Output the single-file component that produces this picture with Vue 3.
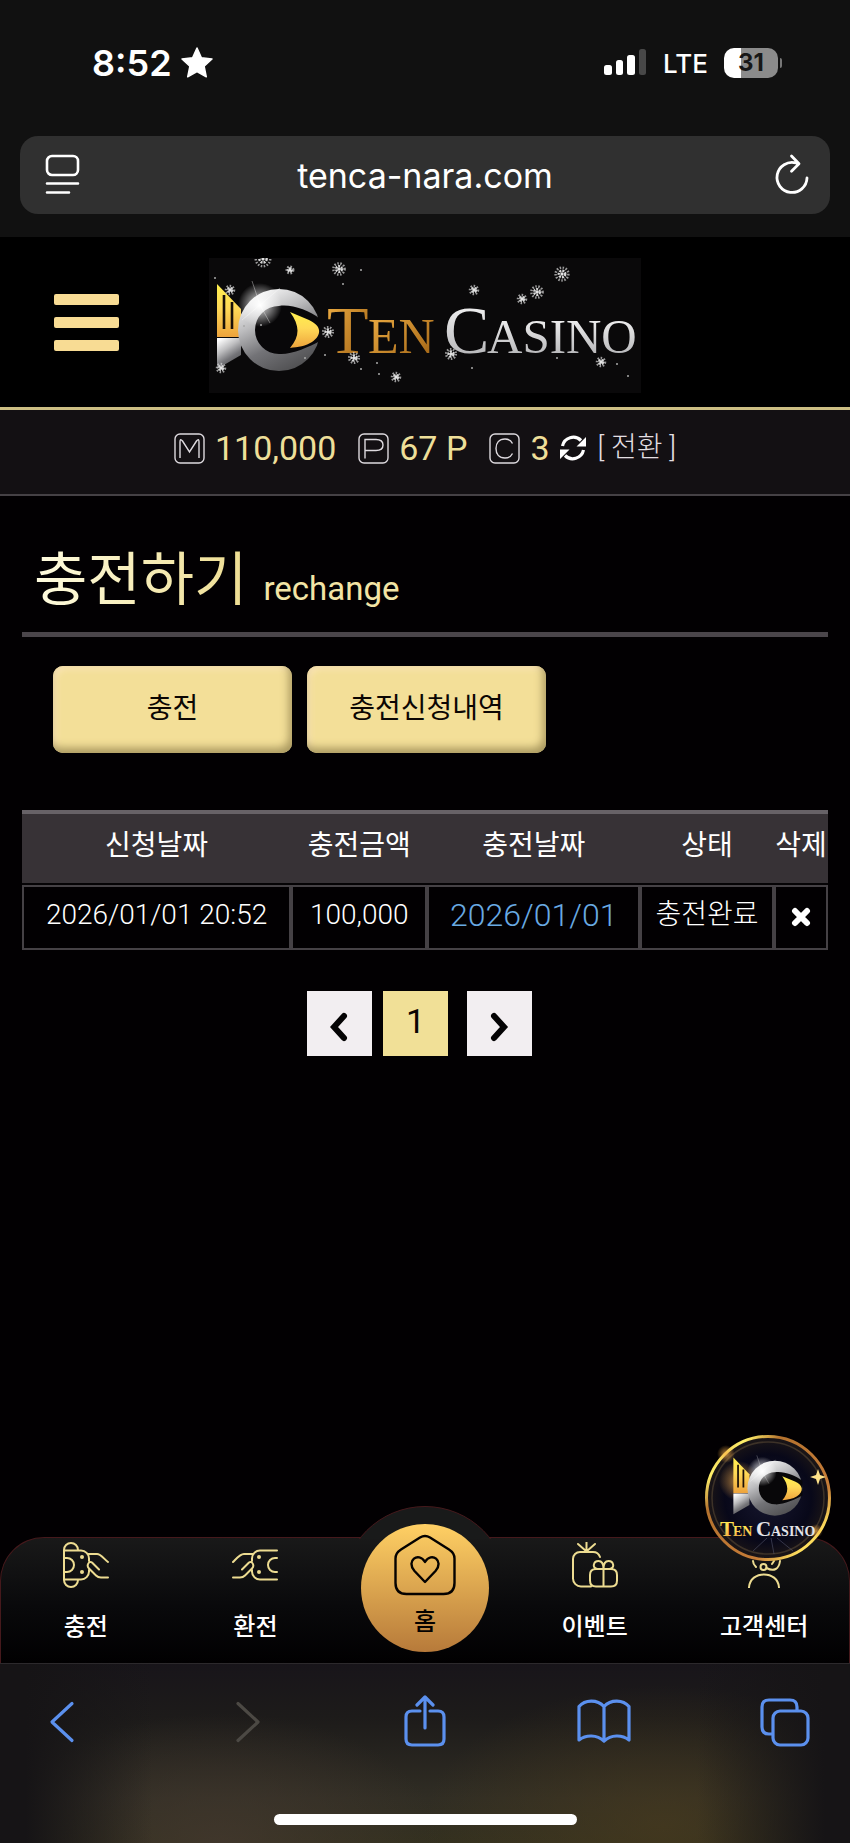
<script setup>
const balances = [
  { key: 'M', value: '110,000' },
  { key: 'P', value: '67 P' },
  { key: 'C', value: '3' },
]
const columns = ['신청날짜', '충전금액', '충전날짜', '상태', '삭제']
const rows = [
  { requested: '2026/01/01 20:52', amount: '100,000', charged: '2026/01/01', state: '충전완료' },
]
const flakes = [
  [54, 1, 9], [81, 12, 4], [130, 11, 7], [21, 32, 5], [12, 110, 5], [119, 74, 6], [145, 100, 6],
  [187, 119, 5], [265, 32, 5], [313, 41, 5], [328, 34, 7], [353, 16, 8], [242, 96, 6], [392, 104, 5],
]
const specks = [[6, 20], [134, 26], [152, 12], [96, 100], [116, 97], [152, 111], [170, 116], [168, 105], [263, 110], [348, 100], [408, 106], [419, 118], [35, 68], [52, 67]]
</script>

<template>
  <div class="screen">
    <header class="browser-top">
      <div class="status">
        <div class="clock">
          <span>8:52</span>
          <svg width="34" height="34" viewBox="0 0 34 34" aria-hidden="true"><path d="M17 2l4.400 9.800 10.600 1.200-7.900 7.200 2.200 10.600L17 25.500 7.700 30.800l2.200-10.600L2 13l10.600-1.200z" fill="#fff" stroke="#fff" stroke-width="1.500" stroke-linejoin="round" /></svg>
        </div>
        <div class="signals">
          <svg width="43" height="28" viewBox="0 0 43 28" aria-hidden="true">
            <rect x="0" y="16" width="8" height="10" rx="2.500" fill="#fff" />
            <rect x="12" y="11" width="7" height="15" rx="2.500" fill="#fff" />
            <rect x="23" y="6" width="8" height="20" rx="2.500" fill="#fff" />
            <rect x="35" y="0" width="7" height="26" rx="2.500" fill="#484848" />
          </svg>
          <span class="lte">LTE</span>
          <div class="battery"><span>31</span></div>
          <i class="battery-tip"></i>
        </div>
      </div>
      <div class="address">
        <button class="plain" aria-label="page menu">
          <svg width="36" height="42" viewBox="0 0 36 42" fill="none" stroke="#fff" stroke-width="2.600" stroke-linecap="round"><rect x="2" y="2" width="31" height="19" rx="5" /><path d="M2 29.500h31M2 38.500h22" /></svg>
        </button>
        <span class="domain">tenca-nara.com</span>
        <button class="plain" aria-label="reload">
          <svg width="36" height="42" viewBox="0 0 36 42" fill="none" stroke="#fff" stroke-width="2.800" stroke-linecap="round" stroke-linejoin="round"><path d="M22 9A15 15 0 1 0 33 24M17.500 2l7.500 7.800-7.500 7.500" /></svg>
        </button>
      </div>
    </header>

    <div class="site-head">
      <button class="menu" aria-label="menu"><i></i><i></i><i></i></button>
      <a href="#" class="brand" aria-label="Ten Casino">
        <svg width="432" height="135" viewBox="0 0 432 135">
          <defs>
            <linearGradient id="gold" x1="0" y1="0" x2="0" y2="1"><stop offset="0" stop-color="#fff04e" /><stop offset=".45" stop-color="#ffd957" /><stop offset="1" stop-color="#eda33c" /></linearGradient>
            <linearGradient id="ring" x1=".2" y1="0" x2=".7" y2="1"><stop offset="0" stop-color="#fff" /><stop offset=".35" stop-color="#bdbdbf" /><stop offset=".65" stop-color="#737377" /><stop offset="1" stop-color="#4e4e50" /></linearGradient>
            <linearGradient id="word" x1="0" y1="0" x2="1" y2="1"><stop offset="0" stop-color="#f3b246" /><stop offset="1" stop-color="#9c5f12" /></linearGradient>
            <linearGradient id="steel" x1="0" y1="0" x2="0" y2="1"><stop offset="0" stop-color="#fff" /><stop offset="1" stop-color="#a9a9ac" /></linearGradient>
            <radialGradient id="glow"><stop offset="0" stop-color="#fff" /><stop offset=".35" stop-color="#fff" stop-opacity=".6" /><stop offset="1" stop-color="#fff" stop-opacity="0" /></radialGradient>
            <g id="fish">
              <path d="M8 26L32 51v28H8z" fill="url(#gold)" />
              <path d="M15 37v34M23 44v27" stroke="#1a1008" stroke-width="2.600" />
              <path d="M8 80h24v17L8 111z" fill="url(#ring)" />
              <circle cx="70" cy="72" r="41" fill="url(#ring)" />
              <path d="M70 48c12-2 30 4 41 13v22C100 89 82 97 70 96a24 24 0 0 1 0-48z" fill="#080709" />
              <path d="M81 54l19 8c13 6 13 15 3 22-6 4-14 5-22 6 10-12 10-22 0-36z" fill="url(#gold)" />
              <circle cx="51" cy="47" r="22" fill="url(#glow)" />
              <path d="M51 47L43 23M51 47l10 18M51 47l20-17M51 47L33 62" stroke="#fff" stroke-width=".6" opacity=".6" />
            </g>
          </defs>
          <rect width="432" height="135" fill="#0a090a" />
          <use href="#fish" />
          <g class="wordmark">
            <g fill="url(#word)"><text x="118" y="95" font-size="68">T</text><text x="159" y="95" font-size="50">EN</text></g>
            <g fill="url(#steel)"><text x="235" y="95" font-size="68">C</text><text x="278" y="95" font-size="49">ASINO</text></g>
          </g>
          <g v-for="(f, i) in flakes" :key="i" :transform="`translate(${f[0]} ${f[1]})`" stroke="#d9d9d9" fill="none">
            <circle :r="f[2] * 0.4" stroke-width="2.500" stroke-dasharray="2 1" />
            <circle :r="f[2] * 0.8" stroke-width="2.500" stroke-dasharray="1.500 1.500" opacity=".7" />
            <circle r="1.200" fill="#fff" />
          </g>
          <circle v-for="(s, i) in specks" :key="'s' + i" :cx="s[0]" :cy="s[1]" r="1" fill="#aaa" />
        </svg>
      </a>
    </div>

    <div class="balances">
      <div v-for="b in balances" :key="b.key" class="balance">
        <svg width="31" height="31" viewBox="0 0 31 31" fill="none" stroke="#dedadf" stroke-width="1.400" role="img" :aria-label="b.key">
          <rect x="1" y="1" width="29" height="29" rx="5" />
          <path v-if="b.key === 'M'" d="M6 25V9q0-4 2.500-1L15.500 19 22.500 8Q25 5 25 9V25" />
          <path v-else-if="b.key === 'P'" d="M7 25.500V6.500H18q7 0 7 5.500T18 17.500H7" />
          <path v-else d="M23.500 10.500C22 7.500 19.500 6 16 6c-6 0-9 4-9 9.500S10 25 16 25c3.500 0 6-1.500 7.500-4.500" />
        </svg>
        <span>{{ b.value }}</span>
      </div>
      <button class="plain swap">
        <svg width="28" height="28" viewBox="0 0 28 28" aria-hidden="true"><path d="M3.500 12A11 11 0 0 1 22 6.500M24.500 16A11 11 0 0 1 6 21.500" fill="none" stroke="#fff" stroke-width="3.200" /><path d="M27 3v9.500H17.500zM1 25v-9.500h9.500z" fill="#fff" /></svg>
        <span>[ 전환 ]</span>
      </button>
    </div>

    <main>
      <h1><span class="ko">충전하기</span><span class="en">rechange</span></h1>
      <div class="tabs">
        <button>충전</button>
        <button>충전신청내역</button>
      </div>
      <table>
        <colgroup><col class="c1" /><col class="c2" /><col class="c3" /><col class="c4" /><col class="c5" /></colgroup>
        <thead><tr><th v-for="c in columns" :key="c" scope="col">{{ c }}</th></tr></thead>
        <tbody>
          <tr v-for="r in rows" :key="r.requested">
            <td>{{ r.requested }}</td>
            <td>{{ r.amount }}</td>
            <td class="charged"><a href="#">{{ r.charged }}</a></td>
            <td>{{ r.state }}</td>
            <td>
              <button class="plain remove" aria-label="삭제"><svg width="20" height="20" viewBox="0 0 20 20"><path d="M4 4l12 12M16 4L4 16" stroke="#fff" stroke-width="6" stroke-linecap="round" /></svg></button>
            </td>
          </tr>
        </tbody>
      </table>
      <nav class="pages" aria-label="pages">
        <button aria-label="previous"><svg width="20" height="30" viewBox="0 0 20 30"><path d="M14 4L4 15l10 11" fill="none" stroke="#040304" stroke-width="6" stroke-linecap="round" /></svg></button>
        <button class="current">1</button>
        <button class="next" aria-label="next"><svg width="20" height="30" viewBox="0 0 20 30"><path d="M4 4l10 11L4 26" fill="none" stroke="#040304" stroke-width="6" stroke-linecap="round" /></svg></button>
      </nav>
    </main>

    <nav class="dock">
      <a href="#">
        <svg width="46" height="46" viewBox="0 0 46 46"><path d="M1 38V8a7 7 0 0 1 14 0M1 38a7 7 0 0 0 14 0M1 8.500h17a8 8 0 0 1 8 8V19M1 37.500h17a8 8 0 0 0 8-8V28M1 16h3a7 7 0 0 1 0 14H1M25 12h9c4 0 7 5 11 8M36 27.500l-7-7c-3-2-6 3-3 6l7 7c2 2 3 2 5 2h7" /><g class="dot"><circle cx="19" cy="15" r="2" /><circle cx="19" cy="30" r="2" /></g></svg>
        <span>충전</span>
      </a>
      <a href="#">
        <svg width="46" height="46" viewBox="0 0 46 46"><path d="M45 8.500H28a8 8 0 0 0-8 8V19M45 37.500H28a8 8 0 0 1-8-8V28M45 16h-2a7 7 0 0 0 0 14h2M1 20c4-4 7-8 11-8h9M10 27.500l7-7c3-2 6 3 3 6l-7 7c-2 2-3 2-5 2H1" /><g class="dot"><circle cx="27" cy="15" r="2" /><circle cx="27" cy="30" r="2" /></g></svg>
        <span>환전</span>
      </a>
      <a href="#" class="home">
        <svg width="62" height="62" viewBox="0 0 62 62"><path d="M26 3.500q5-3 10 0L55 15.500q5.500 3.500 5.500 9V49q0 11-11 11H12.500Q1.500 60 1.500 49V24.500q0-5.500 5.500-9z" /><path d="M31 48L20.500 37c-9-10 4-20 10.500-9 6.500-11 19.500-1 10.500 9z" /></svg>
        <span>홈</span>
      </a>
      <a href="#">
        <svg width="46" height="46" viewBox="0 0 46 46"><path d="M19 44.500H9a8 8 0 0 1-8-8V17a7 7 0 0 1 7-7h13c4 0 6 2 7 5M14.500 9.500V0M14 9L6 2M15 9l8-7M31 27h8q6 0 6 6v5.500q0 6-6 6H24q-6 0-6-6V33q0-6 6-6zM31.500 27v17.500M31.500 27h-6c-6-1-4-8 1-8 4 0 5 4 5 8h6c6-1 4-8-1-8-4 0-5 4-5 8" /></svg>
        <span>이벤트</span>
      </a>
      <a href="#">
        <svg width="46" height="46" viewBox="0 0 46 46"><path d="M8 45.500C9 28 37 28 38 45.500M12 19c0 2 1 4 3 6M25.500 26C33 30 38 27 39 19M31 22l2-3" /><circle cx="22.500" cy="25" r="3" /></svg>
        <span>고객센터</span>
      </a>
      <button class="badge" aria-label="Ten Casino">
        <svg width="126" height="126" viewBox="0 0 126 126">
          <defs>
            <radialGradient id="night"><stop offset="0" stop-color="#17172f" /><stop offset=".7" stop-color="#080819" /><stop offset="1" stop-color="#1d1716" /></radialGradient>
            <linearGradient id="rim" x1="0" y1="0" x2="1" y2="1"><stop offset="0" stop-color="#b86c20" /><stop offset=".17" stop-color="#fff06a" /><stop offset=".3" stop-color="#b4722e" /><stop offset=".7" stop-color="#c67c38" /><stop offset=".85" stop-color="#ffe05e" /><stop offset="1" stop-color="#b86c20" /></linearGradient>
            <radialGradient id="amber"><stop offset="0" stop-color="#ffb44a" stop-opacity=".7" /><stop offset="1" stop-color="#ffb44a" stop-opacity="0" /></radialGradient>
          </defs>
          <circle cx="63" cy="63" r="62" fill="url(#night)" />
          <circle cx="63" cy="63" r="61.500" fill="none" stroke="url(#rim)" stroke-width="3" />
          <circle cx="63" cy="63" r="56" fill="none" stroke="#3d3228" stroke-width="1.500" />
          <circle cx="34" cy="46" r="20" fill="url(#amber)" />
          <use href="#fish" transform="translate(23 5) scale(.67)" />
          <path d="M113 34l2 6 6 2-6 2-2 6-2-6-6-2 6-2z" fill="#ffe28a" />
          <circle cx="21" cy="19" r="9" fill="url(#amber)" />
          <circle cx="111" cy="96" r="7" fill="url(#amber)" />
          <path d="M62 103l-14 13M66 103l3 16M72 103l16 13" stroke="#5e6079" stroke-width="1" opacity=".5" />
          <g class="wordmark strong">
            <g fill="url(#gold)"><text x="15" y="101" font-size="21">T</text><text x="28" y="101" font-size="14">EN</text></g>
            <g fill="#e4e4e8"><text x="51" y="101" font-size="21">C</text><text x="66" y="101" font-size="14">ASINO</text></g>
          </g>
        </svg>
      </button>
    </nav>

    <footer class="browser-bottom">
      <div class="tools">
        <button class="plain" aria-label="back"><svg width="50" height="54" viewBox="0 0 50 54"><path d="M34 8.500L14 27l20 18.500" /></svg></button>
        <button class="plain" aria-label="forward" disabled><svg width="50" height="54" viewBox="0 0 50 54"><path d="M20 8.500L40 27 20 45.500" /></svg></button>
        <button class="plain" aria-label="share"><svg width="50" height="54" viewBox="0 0 50 54"><path d="M23 16h-8q-6 0-6 6v22q0 6 6 6h26q6 0 6-6V22q0-6-6-6h-8M28 33V2M20 10l8-8 8 8" /></svg></button>
        <button class="plain" aria-label="bookmarks"><svg width="54" height="54" viewBox="0 0 54 54"><path d="M27 11.500C20 4 8 4.500 2 11.500v33.500c7-5.500 18-5.500 25 1 7-6.500 18-6.500 25-1v-33.500c-6-7-18-7.500-25 0zm0 0v34" /></svg></button>
        <button class="plain" aria-label="tabs"><svg width="52" height="54" viewBox="0 0 52 54"><path d="M12 39H9q-7 0-7-7V12q0-7 7-7h21q7 0 7 7v3" /><rect x="13" y="16" width="35" height="34" rx="7" /></svg></button>
      </div>
      <div class="indicator"></div>
    </footer>
  </div>
</template>

<style>
body {
  background: #020002;
}
</style>

<style scoped>
.screen {
  display: flex;
  flex-direction: column;
  min-height: 100vh;
  box-sizing: border-box;
  background: #020002;
  color: #fff;
  font-family: Roboto, "Noto Sans CJK KR", sans-serif;
}
button {
  font: inherit;
  border: 0;
  padding: 0;
  cursor: pointer;
}
a {
  color: inherit;
  text-decoration: none;
}
svg {
  display: block;
}
.plain {
  background: none;
  color: inherit;
}
.browser-top {
  background: #111;
  padding: 42px 20px 23px;
  font-family: Inter, sans-serif;
}
.status {
  display: flex;
  justify-content: space-between;
  align-items: center;
  height: 42px;
  padding: 0 48px 0 72px;
}
.clock,
.signals {
  display: flex;
  align-items: center;
}
.clock {
  gap: 8px;
  font-size: 36px;
  font-weight: 600;
}
.lte {
  margin: 0 16px;
  font-size: 26px;
  font-weight: 500;
}
.battery {
  width: 54px;
  height: 30px;
  border-radius: 10px;
  background: linear-gradient(90deg, #fff 31%, #8b8b8b 31%);
  color: #171717;
  font-size: 24px;
  font-weight: 700;
  line-height: 30px;
  text-align: center;
}
.battery-tip {
  width: 2px;
  height: 10px;
  margin-left: 2px;
  border-radius: 0 2px 2px 0;
  background: #777;
}
.address {
  display: flex;
  justify-content: space-between;
  align-items: center;
  height: 78px;
  margin-top: 52px;
  padding: 0 20px 0 25px;
  border-radius: 18px;
  background: #303030;
}
.domain {
  margin-right: 5px;
  font-size: 34px;
}
.site-head {
  display: grid;
  grid-template-columns: 1fr auto 1fr;
  align-items: center;
  padding: 21px 0 14px;
  background: #000;
  border-bottom: 3px solid #cdbf84;
}
.menu {
  display: flex;
  flex-direction: column;
  gap: 12px;
  width: 65px;
  margin-left: 54px;
  margin-bottom: 6px;
  background: none;
}
.menu i {
  height: 11px;
  border-radius: 2px;
  background: #f8dc94;
}
.wordmark {
  font-family: "Liberation Serif", serif;
}
.strong {
  font-weight: 700;
}
.balances {
  display: flex;
  justify-content: center;
  align-items: center;
  gap: 22px;
  height: 86px;
  padding-bottom: 8px;
  box-sizing: border-box;
  border-bottom: 2px solid #454145;
  background: #131013;
}
.balance {
  display: flex;
  align-items: center;
  gap: 10px;
  color: #eedf99;
  font-size: 34px;
  line-height: 40px;
}
.swap {
  display: flex;
  align-items: center;
  gap: 10px;
  margin-left: -12px;
  font-size: 28px;
  font-weight: 300;
  line-height: 40px;
  color: #e2dfe2;
}
main {
  flex: 1;
  padding: 0 22px;
}
h1 {
  display: flex;
  align-items: baseline;
  gap: 16px;
  height: 141px;
  margin: 0;
  padding: 42px 0 0 12px;
  box-sizing: border-box;
  border-bottom: 5px solid #4a454a;
  color: #f2e4a5;
  font-weight: 400;
}
.ko {
  background: linear-gradient(90deg, #fffce0, #eedd91);
  background-clip: text;
  color: transparent;
  font-size: 58px;
  line-height: 84px;
}
.en {
  font-size: 33px;
}
.tabs {
  display: flex;
  gap: 15px;
  margin: 29px 31px 57px;
}
.tabs button {
  width: 239px;
  height: 87px;
  padding-bottom: 8px;
  border-radius: 10px;
  background: #f3df98;
  box-shadow: inset -3px -5px 8px #a9985f, inset 3px 3px 6px #fbe5b8;
  color: #0b0603;
  font-size: 28px;
}
table {
  width: 100%;
  table-layout: fixed;
  border-collapse: separate;
  border-spacing: 0;
  text-align: center;
  white-space: nowrap;
}
.c1 { width: 33.4%; }
.c2 { width: 16.9%; }
.c3 { width: 26.4%; }
.c4 { width: 16.6%; }
.c5 { width: 6.7%; }
th {
  height: 64px;
  padding: 0 0 5px;
  border-top: 4px solid #676267;
  border-bottom: 2px solid #050305;
  background: #373236;
  font-size: 28px;
  font-weight: 400;
  line-height: 36px;
}
td {
  height: 56px;
  padding: 0 0 5px;
  border: 2px solid #454145;
  font-size: 28px;
  font-weight: 300;
  line-height: 36px;
}
.charged {
  color: #69aae3;
  font-size: 32px;
}
.remove {
  display: inline-block;
  vertical-align: middle;
}
.pages {
  display: flex;
  justify-content: center;
  gap: 11px;
  margin: 41px 11px 0 0;
}
.pages button {
  display: flex;
  justify-content: center;
  align-items: center;
  width: 65px;
  height: 65px;
  padding-top: 7px;
  background: #f2eef1;
}
.pages .current {
  padding: 0 0 5px;
  background: #f1e097;
  color: #0b0603;
  font-size: 34px;
}
.pages .next {
  margin-left: 8px;
}
.dock {
  position: relative;
  display: grid;
  grid-template-columns: repeat(5, 1fr);
  height: 126px;
  box-sizing: border-box;
  border: 1px solid #46191c;
  border-bottom: 0;
  border-radius: 44px 44px 0 0;
  background: linear-gradient(#191919, #09090b 55%, #010001);
}
.dock::before {
  content: "";
  position: absolute;
  left: 50%;
  top: -32px;
  width: 166px;
  height: 166px;
  box-sizing: border-box;
  border: 1px solid #46191c;
  border-radius: 50%;
  background: #191a1a;
  transform: translateX(-50%);
  clip-path: inset(0 0 133px 0);
}
.dock a {
  display: flex;
  flex-direction: column;
  align-items: center;
  gap: 21px;
  padding-top: 4px;
  font-size: 24px;
  font-weight: 500;
  line-height: 36px;
}
.dock a > svg {
  fill: none;
  stroke: #eddc91;
  stroke-width: 2;
  stroke-linecap: round;
  stroke-linejoin: round;
}
.dot {
  fill: #eddc91;
  stroke: none;
}
.dock .home {
  position: relative;
  justify-self: center;
  width: 128px;
  height: 128px;
  margin-top: -14px;
  padding-top: 10px;
  box-sizing: border-box;
  gap: 8px;
  border-radius: 50%;
  background: linear-gradient(#ffd064, #b77a3a);
  color: #050200;
}
.dock .home > svg {
  stroke: #050200;
  stroke-width: 2.400;
}
.badge {
  position: absolute;
  right: 18px;
  top: -103px;
  border-radius: 50%;
  background: none;
}
.browser-bottom {
  height: 180px;
  box-sizing: border-box;
  border-top: 1px solid #2c292c;
  padding: 31px 38px 0;
  background:
    linear-gradient(90deg, #161416 3%, transparent 18%, transparent 82%, #161416 97%),
    radial-gradient(ellipse 220px 130px at 26% 100%, #43382ecc, transparent),
    radial-gradient(ellipse 240px 140px at 78% 90%, #493b1eaa, transparent),
    linear-gradient(#18151a, #1d1b1a 30%, #302d24 75%, #33301f);
}
.tools {
  display: flex;
  justify-content: space-between;
}
.tools svg {
  fill: none;
  stroke: #5b90ee;
  stroke-width: 3.200;
  stroke-linecap: round;
  stroke-linejoin: round;
}
.tools button:disabled svg {
  stroke: #4c4944;
}
.indicator {
  width: 303px;
  height: 11px;
  margin: 65px auto 0;
  border-radius: 6px;
  background: #fff;
}
</style>
